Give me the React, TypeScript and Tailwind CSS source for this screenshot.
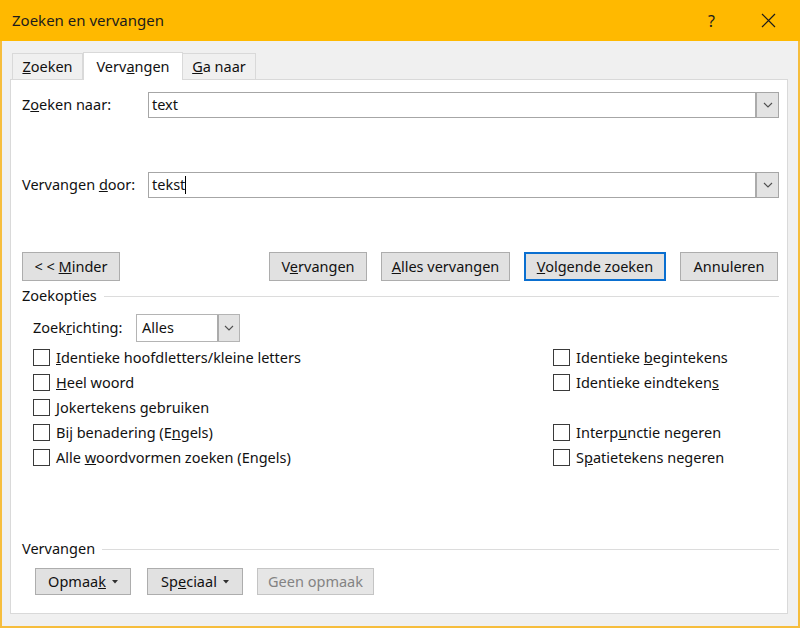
import React from 'react';

const font = "font-['Segoe_UI','Noto_Sans',sans-serif]";

const Chevron = () => (
    <svg width="10" height="6" viewBox="0 0 10 6" fill="none">
        <path d="M1 1 L5 5 L9 1" stroke="#505050" strokeWidth="1.1" />
    </svg>
);

const Caret = () => (
    <svg width="6" height="4" viewBox="0 0 6 4" className="ml-[6px]">
        <path d="M0 0 L6 0 L3 3.5 Z" fill="#303030" />
    </svg>
);

const Combo = ({ value, caret }: { value: string, caret?: boolean }) => (
    <div className="flex-1 flex h-[26px] border border-[#a6a6a6] bg-white">
        <div className="flex-1 flex items-center pl-[3px] text-[14.5px] text-[#111]">
            {value}
            {caret && <span className="w-px h-[18px] bg-black" />}
        </div>
        <div className="w-[23px] flex items-center justify-center bg-[#e3e3e3] border-l-2 border-[#ababab]">
            <Chevron />
        </div>
    </div>
);

const Button = ({ children, w, primary, disabled }: { children: React.ReactNode, w: string, primary?: boolean, disabled?: boolean }) => (
    <div
        className={
            w + " h-full flex items-center justify-center text-[14.5px] " +
            (primary
                ? "bg-[#e1e1e1] border-2 border-[#0a6fd0] text-[#111]"
                : disabled
                    ? "bg-[#e6e6e6] border border-[#c4c4c4] text-[#838383]"
                    : "bg-[#e1e1e1] border border-[#adadad] text-[#111]")
        }
    >
        {children}
    </div>
);

const Check = ({ children }: { children: React.ReactNode }) => (
    <div className="h-[25px] flex items-center">
        <span className="w-[17px] h-[17px] border border-[#3a3a3a] bg-white" />
        <span className="ml-[6px] text-[14.5px] text-[#111]">{children}</span>
    </div>
);

const Header = ({ title }: { title: string }) => (
    <div className="flex items-center h-[18px]">
        <span className="text-[14.5px] text-[#111]">{title}</span>
        <div className="flex-1 h-px bg-[#dcdcdc] ml-[7px]" />
    </div>
);

const App = () => {
    return (
        <div className={"w-[800px] h-[628px] flex flex-col bg-[#f0f0f0] border-x-2 border-b-2 border-[#f6bd3c] " + font}>
            <div className="h-[41px] -mx-[2px] bg-[#ffb900] flex items-center pl-[12px] pr-[24px] text-[#1c1c1c]">
                <span className="text-[15px] flex-1">Zoeken en vervangen</span>
                <span className="text-[16px] mr-[46px]">?</span>
                <svg width="15" height="15" viewBox="0 0 15 15">
                    <path d="M1 1 L14 14 M14 1 L1 14" stroke="#1c1c1c" strokeWidth="1.2" />
                </svg>
            </div>

            <div className="flex pl-[10px] mt-[10px] h-[28px] items-end">
                <div className="h-[26px] w-[71px] border border-b-0 border-[#d9d9d9] bg-[#f0f0f0] flex items-center justify-center text-[14.5px] text-[#111]">
                    <span><u>Z</u>oeken</span>
                </div>
                <div className="h-[28px] w-[100px] -mb-px z-10 border border-b-0 border-[#d9d9d9] bg-white flex items-center justify-center text-[14.5px] text-[#111]">
                    <span>Verv<u>a</u>ngen</span>
                </div>
                <div className="h-[26px] w-[73px] border border-b-0 border-l-0 border-[#d9d9d9] bg-[#f0f0f0] flex items-center justify-center text-[14.5px] text-[#111]">
                    <span><u>G</u>a naar</span>
                </div>
            </div>

            <div className="ml-[8px] w-[778px] h-[535px] border border-[#d9d9d9] bg-white pl-[11px] pr-[8px] flex flex-col text-[#111]">
                <div className="flex items-center mt-[12px]">
                    <span className="w-[126px] text-[14.5px]">Z<u>o</u>eken naar:</span>
                    <Combo value="text" />
                </div>
                <div className="flex items-center mt-[54px]">
                    <span className="w-[126px] text-[14.5px]">Vervangen <u>d</u>oor:</span>
                    <Combo value="tekst" caret />
                </div>

                <div className="flex items-center mt-[54px] h-[29px]">
                    <Button w="w-[98px]"><span>&lt; &lt; <u>M</u>inder</span></Button>
                    <div className="flex-1" />
                    <div className="flex gap-[14px] h-full mr-px">
                        <Button w="w-[98px]"><span>V<u>e</u>rvangen</span></Button>
                        <Button w="w-[129px]"><span><u>A</u>lles vervangen</span></Button>
                        <Button w="w-[142px]" primary><span><u>V</u>olgende zoeken</span></Button>
                        <Button w="w-[98px]">Annuleren</Button>
                    </div>
                </div>

                <div className="mt-[6px]">
                    <Header title="Zoekopties" />
                </div>

                <div className="flex items-center mt-[9px] ml-[11px] h-[28px]">
                    <span className="w-[103px] text-[14.5px]">Zoek<u>r</u>ichting:</span>
                    <div className="w-[104px] h-full flex border border-[#b4b4b4] bg-white">
                        <div className="flex-1 flex items-center pl-[5px] text-[14.5px]">Alles</div>
                        <div className="w-[22px] flex items-center justify-center bg-[#e3e3e3] border-l-2 border-[#ababab]">
                            <Chevron />
                        </div>
                    </div>
                </div>

                <div className="grid grid-cols-[520px_1fr] ml-[11px] mt-[3px]">
                    <div className="flex flex-col">
                        <Check><u>I</u>dentieke hoofdletters/kleine letters</Check>
                        <Check><u>H</u>eel woord</Check>
                        <Check><u>J</u>okertekens gebruiken</Check>
                        <Check>Bij benadering (E<u>n</u>gels)</Check>
                        <Check>Alle <u>w</u>oordvormen zoeken (Engels)</Check>
                    </div>
                    <div className="flex flex-col">
                        <Check>Identieke <u>b</u>egintekens</Check>
                        <Check>Identieke eindteken<u>s</u></Check>
                        <div className="h-[25px]" />
                        <Check>Interp<u>u</u>nctie negeren</Check>
                        <Check>S<u>p</u>atietekens negeren</Check>
                    </div>
                </div>

                <div className="mt-[70px]">
                    <Header title="Vervangen" />
                </div>

                <div className="flex items-center ml-[13px] mt-[10px] h-[27px] gap-[16px]">
                    <Button w="w-[96px]"><span>Opmaa<u>k</u></span><Caret /></Button>
                    <div className="flex h-full gap-[14px]">
                        <Button w="w-[96px]"><span>Sp<u>e</u>ciaal</span><Caret /></Button>
                        <Button w="w-[117px]" disabled>Geen opmaak</Button>
                    </div>
                </div>
            </div>
        </div>
    );
};

export default App;
